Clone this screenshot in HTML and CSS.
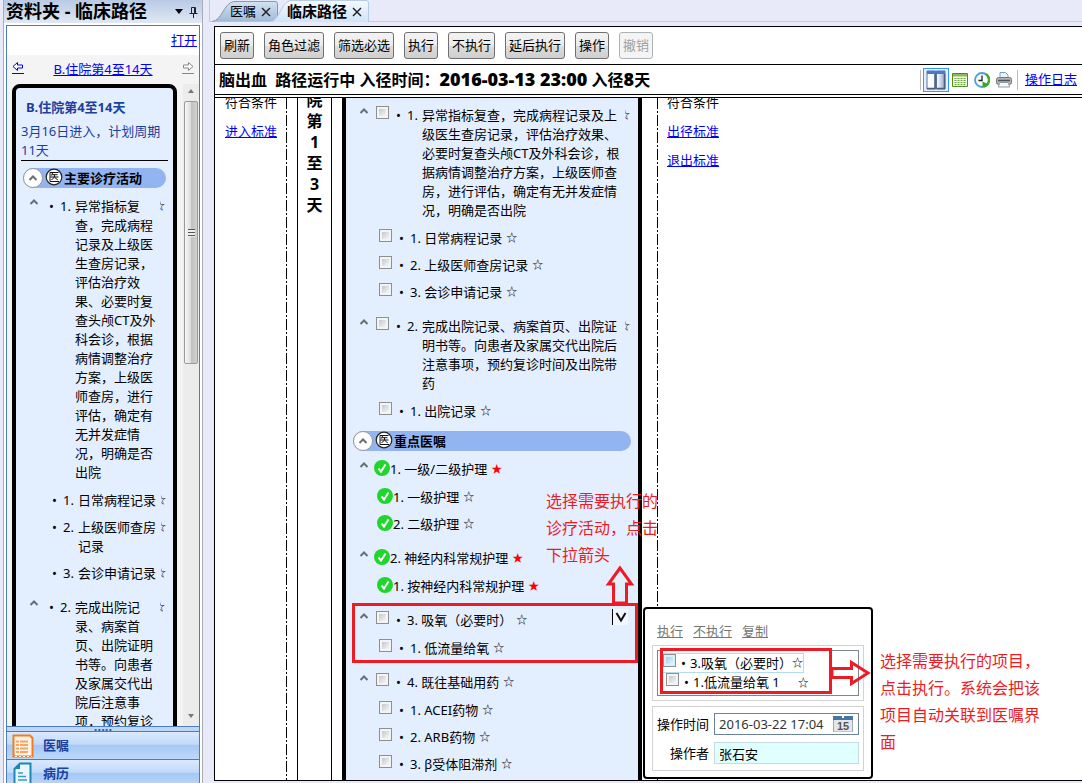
FILE: index.html
```html
<!DOCTYPE html>
<html lang="zh-CN">
<head>
<meta charset="utf-8">
<title>临床路径</title>
<link rel="stylesheet" href="styles.css">
</head>
<body>
<svg class="defs" aria-hidden="true">
  <symbol id="chev" viewBox="0 0 10 6"><path d="M1.5 5L5 1.5L8.5 5" fill="none" stroke="#6b6f75" stroke-width="2"/></symbol>
  <symbol id="med" viewBox="0 0 18 18"><circle cx="9" cy="9" r="7.8" fill="#fff" stroke="#222" stroke-width="1.2"/><path d="M13.5 4.500H5v9h9M7.500 5L6.500 7.500M7 6.700h5.500M5.500 9h8M9.500 6.700V9L6.500 12M9.800 9.500l3 2.500" fill="none" stroke="#111" stroke-width="1"/></symbol>
  <symbol id="ok" viewBox="0 0 16 16"><circle cx="8" cy="8" r="8" fill="#1fd62b"/><path d="M4.500 8.500L7 11.500L11.500 4.500" fill="none" stroke="#fff" stroke-width="2"/></symbol>
  <symbol id="x" viewBox="0 0 10 10"><path d="M1 1L9 9M9 1L1 9" stroke="#222" stroke-width="1.500"/></symbol>
</svg>
<div class="app">
  <aside class="side">
    <header class="side-head">
      <h1>资料夹 - 临床路径</h1>
      <svg class="side-tools" viewBox="0 0 24 12"><path d="M0 3h8L4 8z" fill="#000"/><path d="M16.500 7V1.500h4V7M14.500 7.500h8M18.500 7.500v4.500M19.500 1.500V7" fill="none" stroke="#222"/></svg>
    </header>
    <div class="side-panel">
      <div class="open-row"><a href="#">打开</a></div>
      <nav class="stage-nav">
        <a href="#" aria-label="上一阶段"><svg viewBox="0 0 12 14"><path d="M1 5.500L5.500 1.500V4H10.500V7H5.500V9.500Z" fill="#fff" stroke="#00f"/><path d="M0 12.500h12" stroke="#00f"/></svg></a>
        <a href="#">B.住院第4至14天</a>
        <a href="#" aria-label="下一阶段"><svg viewBox="0 0 12 14"><path d="M11 5.500L6.500 1.500V4H1.500V7H6.500V9.500Z" fill="#fff" stroke="#888"/><path d="M0 12.500h12" stroke="#888"/></svg></a>
      </nav>
      <div class="side-body">
        <section class="card">
          <h2>B.住院第4至14天</h2>
          <p class="period">3月16日进入，计划周期11天</p>
          <div class="group-head"><span class="toggle"><svg><use href="#chev"/></svg></span><svg class="med"><use href="#med"/></svg>主要诊疗活动</div>
          <div class="item"><svg class="chev"><use href="#chev"/></svg><span class="dot">•</span><span class="num">1.</span><span class="txt">异常指标复查，完成病程记录及上级医生查房记录，评估治疗效果、必要时复查头颅CT及外科会诊，根据病情调整治疗方案，上级医师查房，进行评估，确定有无并发症情况，明确是否出院</span><span class="star">☆</span></div>
          <div class="item sub first"><span class="dot">•</span><span class="num">1.</span><span class="txt">日常病程记录</span><span class="star">☆</span></div>
          <div class="item sub"><span class="dot">•</span><span class="num">2.</span><span class="txt">上级医师查房记录</span><span class="star">☆</span></div>
          <div class="item sub"><span class="dot">•</span><span class="num">3.</span><span class="txt">会诊申请记录</span><span class="star">☆</span></div>
          <div class="item later"><svg class="chev"><use href="#chev"/></svg><span class="dot">•</span><span class="num">2.</span><span class="txt">完成出院记录、病案首页、出院证明书等。向患者及家属交代出院后注意事项，预约复诊时间及出院带药</span><span class="star">☆</span></div>
        </section>
        <div class="scroll"><span class="up"></span><div class="thumb"><i></i></div><span class="down"></span></div>
      </div>
      <div class="grip">·····</div>
      <button class="nav-btn" type="button"><svg viewBox="0 0 22 24"><path d="M1.500 1.500H18L20.500 4V22.500H1.500Z" fill="#fff2e6" stroke="#f47b20" stroke-width="2"/><path d="M4 7.500h12M4 11h12M4 14.500h12M4 18h12" stroke="#f6a564" stroke-width="2"/><path d="M7.500 6v14" stroke="#fff2e6"/><path d="M3 22.500h17" stroke="#fff" stroke-dasharray="2 2"/></svg>医嘱</button>
      <button class="nav-btn" type="button"><svg viewBox="0 0 22 24"><path d="M8 1.500H18.500V22.500H2.500V7Z" fill="#e9f6fc" stroke="#1b87b8" stroke-width="2"/><path d="M8 1.500V7H2.500Z" fill="#1b87b8"/><path d="M6 11h5M6 14.500h8M6 18h9" stroke="#3d9cc6" stroke-width="1.500"/></svg>病历</button>
    </div>
  </aside>

  <main class="main">
    <div class="tabs">
      <button class="tab" type="button"><svg class="shape" viewBox="0 0 68 22" preserveAspectRatio="none"><defs><linearGradient id="g1" x2="0" y2="1"><stop offset="0" stop-color="#d3e2f2"/><stop offset="1" stop-color="#9fbad8"/></linearGradient></defs><path d="M0 21.500C10 21 12 3 22 1.500H64Q66.500 1.500 66.500 4V21.500" fill="url(#g1)" stroke="#8a97a8"/></svg><span>医嘱</span><svg class="x"><use href="#x"/></svg></button>
      <button class="tab active" type="button"><svg class="shape" viewBox="0 0 100 22" preserveAspectRatio="none"><defs><linearGradient id="g2" x2="0" y2="1"><stop offset="0" stop-color="#f4f9ff"/><stop offset="1" stop-color="#cfe4f9"/></linearGradient></defs><path d="M0 22C9 21 11 3 20 .5H96Q98.500 .5 98.500 3V22" fill="url(#g2)" stroke="#b6cbe4"/></svg><span>临床路径</span><svg class="x"><use href="#x"/></svg></button>
    </div>
    <div class="page">
      <div class="toolbar">
        <button type="button">刷新</button><button type="button">角色过滤</button><button type="button">筛选必选</button><button type="button">执行</button><button type="button">不执行</button><button type="button">延后执行</button><button type="button">操作</button><button type="button" disabled>撤销</button>
      </div>
      <div class="status">
        <h2>脑出血&nbsp; 路径运行中 入径时间：<b>2016-03-13 23:00</b> 入径<b>8</b>天</h2>
        <div class="views">
          <i class="sep"></i>
          <button class="view on" type="button" aria-label="双栏"><svg viewBox="0 0 20 20"><defs><linearGradient id="g3" x2="1"><stop offset="0" stop-color="#fff"/><stop offset=".6" stop-color="#f2f6fb"/><stop offset="1" stop-color="#8fa6c6"/></linearGradient></defs><path d="M1 1h8.500v18H1zM10.500 1H19v18h-8.500z" fill="url(#g3)" stroke="#56709a"/><path d="M1 1h8.500v3H1zM10.500 1H19v3h-8.500z" fill="#4a78d4"/><path d="M1 18.500h8.500M10.500 18.500H19M9 4v15M18.500 4v15" stroke="#4d5f7c" stroke-width="1.500"/></svg></button>
          <button class="view" type="button" aria-label="表格"><svg viewBox="0 0 16 16"><path d="M.500 1.500h15v13H.500z" fill="#f1f8e8" stroke="#4c8a22"/><path d="M1 2h14v2.500H1z" fill="#8cbb5f"/><path d="M2.500 6.500h11M2.500 8.500h11M2.500 10.500h11M2.500 12.500h11" stroke="#6ba53d" stroke-dasharray="2 1"/></svg></button>
          <button class="view" type="button" aria-label="历史"><svg viewBox="0 0 16 16"><circle cx="8" cy="8" r="7" fill="#f5fbff" stroke="#4aa3dc" stroke-width="1.800"/><path d="M12 2A7 7 0 0 1 10 14.500" fill="none" stroke="#46ad2f" stroke-width="2.500"/><path d="M8 3.500V8.500H4.500" fill="none" stroke="#222" stroke-width="1.300"/><path d="M8.500 15.500V9.500l6.500 3z" fill="#3da52b"/></svg></button>
          <button class="view" type="button" aria-label="打印"><svg viewBox="0 0 16 16"><path d="M4 .500h5.500L12 3v4H4z" fill="#eaf4fe" stroke="#6fa1d4"/><rect x=".500" y="5.500" width="15" height="7" rx="2" fill="#b4b4b4" stroke="#777"/><path d="M2 8.500h12" stroke="#555" stroke-width="1.500"/><path d="M3.500 10.500h9l1 4.500h-11z" fill="#f5f9fe" stroke="#8d9db0"/></svg></button>
          <i class="sep"></i>
          <a href="#">操作日志</a>
        </div>
      </div>
      <div class="board">
        <div class="col in"><span>符合条件</span><a href="#">进入标准</a></div>
        <i class="dash"></i>
        <div class="col stage"><span>院</span><span>第</span><span>1</span><span>至</span><span>3</span><span>天</span></div>
        <div class="col plan">
          <div class="item"><svg class="chev"><use href="#chev"/></svg><input type="checkbox" aria-label="异常指标复查"><span class="dot">•</span><span class="num">1.</span><span class="txt">异常指标复查，完成病程记录及上级医生查房记录，评估治疗效果、必要时复查头颅CT及外科会诊，根据病情调整治疗方案，上级医师查房，进行评估，确定有无并发症情况，明确是否出院</span><span class="star cut">☆</span></div>
          <div class="item sub first"><input type="checkbox" id="c1"><span class="dot">•</span><label for="c1">1. 日常病程记录</label><span class="star">☆</span></div>
          <div class="item sub"><input type="checkbox" id="c2"><span class="dot">•</span><label for="c2">2. 上级医师查房记录</label><span class="star">☆</span></div>
          <div class="item sub"><input type="checkbox" id="c3"><span class="dot">•</span><label for="c3">3. 会诊申请记录</label><span class="star">☆</span></div>
          <div class="item later"><svg class="chev"><use href="#chev"/></svg><input type="checkbox" aria-label="完成出院记录"><span class="dot">•</span><span class="num">2.</span><span class="txt">完成出院记录、病案首页、出院证明书等。向患者及家属交代出院后注意事项，预约复诊时间及出院带药</span><span class="star cut">☆</span></div>
          <div class="item sub first"><input type="checkbox" id="c4"><span class="dot">•</span><label for="c4">1. 出院记录</label><span class="star">☆</span></div>
          <div class="group-head"><span class="toggle"><svg><use href="#chev"/></svg></span><svg class="med"><use href="#med"/></svg>重点医嘱</div>
          <div class="item"><svg class="chev"><use href="#chev"/></svg><svg class="ok"><use href="#ok"/></svg><span>1. 一级/二级护理</span><span class="star red">★</span></div>
          <div class="item sub first"><svg class="ok"><use href="#ok"/></svg><span>1. 一级护理</span><span class="star">☆</span></div>
          <div class="item sub"><svg class="ok"><use href="#ok"/></svg><span>2. 二级护理</span><span class="star">☆</span></div>
          <div class="item later"><svg class="chev"><use href="#chev"/></svg><svg class="ok"><use href="#ok"/></svg><span>2. 神经内科常规护理</span><span class="star red">★</span></div>
          <div class="item sub first"><svg class="ok"><use href="#ok"/></svg><span>1. 按神经内科常规护理</span><span class="star red">★</span></div>
          <div class="marked">
            <div class="item"><svg class="chev"><use href="#chev"/></svg><input type="checkbox" id="c5"><span class="dot">•</span><label for="c5">3. 吸氧（必要时）</label><span class="star">☆</span><button class="drop" type="button" aria-label="展开"><svg viewBox="0 0 12 12"><path d="M1.500 2L6 9.500L10.500 2" fill="none" stroke="#111" stroke-width="2"/></svg></button></div>
            <div class="item sub first"><input type="checkbox" id="c6"><span class="dot">•</span><label for="c6">1. 低流量给氧</label><span class="star">☆</span></div>
            <div class="note note-left">选择需要执行的诊疗活动，点击下拉箭头</div>
            <svg class="arrow-up" viewBox="0 0 30 40"><path d="M15 3L3.500 19H8.500V38H21.500V19H26.500Z" fill="none" stroke="#ed1c24" stroke-width="3"/></svg>
            <div class="popup">
              <div class="pop-links"><a href="#">执行</a><a href="#">不执行</a><a href="#">复制</a></div>
              <div class="frame">
                <div class="pick">
                  <div class="pick-row hot"><input type="checkbox" id="p1"><span class="dot">•</span><label for="p1">3.吸氧（必要时）</label><span class="mini">☆</span></div>
                  <div class="pick-row under"><input type="checkbox" id="p2"><span class="dot">•</span><label for="p2">1.低流量给氧 1</label><span class="mini far">☆</span></div>
                </div>
                <svg class="arrow-right" viewBox="0 0 40 28"><path d="M1 9.500H20.500V3.500L37 14L20.500 24.500V18.500H1Z" fill="none" stroke="#ed1c24" stroke-width="3"/></svg>
              </div>
              <div class="frame form">
                <label for="when">操作时间</label>
                <div class="date"><input id="when" type="text" value="2016-03-22 17:04"><svg viewBox="0 0 20 16"><path d="M.500 0h19v16H.500z" fill="#e4e6ea" stroke="#a4a8ae"/><path d="M0 0h20v4H0z" fill="#4577a6"/><path d="M9 0h2v2H9z" fill="#fff"/><text x="4" y="14">15</text></svg></div>
                <label for="who" class="who">操作者</label>
                <input id="who" class="name" type="text" value="张石安">
              </div>
              <div class="note note-right">选择需要执行的项目，点击执行。系统会把该项目自动关联到医嘱界面</div>
            </div>
          </div>
          <div class="item later"><svg class="chev"><use href="#chev"/></svg><input type="checkbox" id="c7"><span class="dot">•</span><label for="c7">4. 既往基础用药</label><span class="star">☆</span></div>
          <div class="item sub first"><input type="checkbox" id="c8"><span class="dot">•</span><label for="c8">1. ACEI药物</label><span class="star">☆</span></div>
          <div class="item sub"><input type="checkbox" id="c9"><span class="dot">•</span><label for="c9">2. ARB药物</label><span class="star">☆</span></div>
          <div class="item sub"><input type="checkbox" id="c10"><span class="dot">•</span><label for="c10">3. β受体阻滞剂</label><span class="star">☆</span></div>
        </div>
        <i class="dash"></i>
        <div class="col out"><span>符合条件</span><a href="#">出径标准</a><a href="#">退出标准</a></div>
      </div>
    </div>
  </main>
</div>
</body>
</html>
```

FILE: styles.css
```css
*, *::before, *::after { box-sizing: border-box; }
body {
  margin: 0;
  font: 13px/19px "Noto Sans", "Noto Sans CJK SC", sans-serif;
  color: #000;
  background: #e8eaf9;
}
button, input { font: inherit; color: inherit; }
a { color: #00f; }
h1, h2, p { margin: 0; }
.defs { position: absolute; width: 0; height: 0; }
.app { display: flex; height: 100vh; overflow: hidden; }

/* sidebar */
.side {
  flex: 0 0 200px;
  margin-left: 3px;
  display: flex;
  flex-direction: column;
  border: solid #a9adb5;
  border-width: 0 1px;
  background: #fff;
}
.side-head {
  display: flex;
  align-items: center;
  justify-content: space-between;
  flex: 0 0 23px;
  padding: 0 3px 0 2px;
  background: linear-gradient(#b9cae4, #dfe8f5);
}
.side-head h1 { font-size: 18px; line-height: 23px; white-space: nowrap; }
.side-tools { width: 24px; height: 12px; }
.side-panel {
  flex: 1;
  min-height: 0;
  display: flex;
  flex-direction: column;
  margin: 2px 2px 0;
  border: solid #4a7ebb;
  border-width: 1px 1px 0;
}
.open-row { flex: 0 0 29px; padding: 5px 2px; text-align: right; }
.stage-nav {
  flex: 0 0 29px;
  display: flex;
  justify-content: space-between;
  padding: 5px 5px 0;
  background: #f4f4f4;
}
.stage-nav svg { display: block; width: 12px; height: 14px; margin-top: 1px; }
.side-body { flex: 1; min-height: 0; display: flex; overflow: hidden; background: #f4f4f4; }
.card {
  flex: 1;
  min-width: 0;
  height: 800px;
  margin: 0 6px 0 5px;
  padding: 10px 5px 0;
  border: 4px solid #000;
  border-radius: 8px 8px 0 0;
  background: #e3eeff;
}
.card h2 { padding-left: 5px; font-size: 13px; line-height: 19px; color: #1a3f9f; }
.period { margin-top: 5px; color: #1a3f9f; border-bottom: 1px solid #000; }
.scroll {
  flex: 0 0 16px;
  display: flex;
  flex-direction: column;
  align-items: center;
  background: #ececec;
}
.up, .down { border: 3px solid transparent; }
.up { margin: 2px 0 8px; border-bottom: 4px solid #777; }
.down { margin: auto 0 5px; border-top: 4px solid #777; }
.thumb {
  width: 14px;
  flex: 0 1 263px;
  display: grid;
  place-items: center;
  border: 1px solid #999;
  border-radius: 2px;
  background: linear-gradient(90deg, #f6f6f6, #dcdcdc 50%, #bdbfc2 51%, #d2d2d2);
}
.thumb i { width: 7px; height: 8px; background: repeating-linear-gradient(#555 0 1px, #eee 1px 3px); }
.grip {
  flex: 0 0 5px;
  border-top: 1px solid #4a7ebb;
  background: #bdd6f7;
  color: #2b5fa8;
  font-weight: bold;
  line-height: 4px;
  text-align: center;
  overflow: hidden;
}
.nav-btn {
  flex: 0 0 28px;
  display: flex;
  align-items: center;
  gap: 9px;
  padding: 0 5px;
  border: 0;
  border-top: 1px solid #4a7ebb;
  background: linear-gradient(#dbe9fd, #c2daf9 45%, #a6c8f5 50%, #bdd9fb);
  color: #1a3f9f;
  font-weight: bold;
}
.nav-btn svg { width: 22px; height: 24px; }
.nav-btn:last-child { margin-bottom: -4px; }

/* list rows shared by the sidebar and the board */
.item { position: relative; display: flex; margin-top: 9px; padding-left: 30px; }
.item.sub { margin-top: 8px; padding-left: 33px; }
.item.first { margin-top: 9px; }
.item.later { margin-top: 15px; }
.chev { position: absolute; left: 13px; top: 2px; width: 10px; height: 6px; }
.dot { flex: 0 0 9px; }
.num { flex: 0 0 15px; }
.ok { width: 16px; height: 16px; margin-left: -2px; }
.star { flex: none; margin-left: 4px; font-size: 11px; line-height: 18px; }
.star.red { color: #f00; }
.star.cut { width: 5px; margin-left: 3px; overflow: hidden; direction: rtl; }
.item label, .item > span { white-space: nowrap; }
.item .txt { white-space: normal; }
.group-head {
  display: flex;
  align-items: center;
  height: 20px;
  border-radius: 10px;
  background: #92b4f0;
  font-weight: bold;
}
.toggle {
  display: grid;
  place-items: center;
  width: 20px;
  height: 20px;
  border: 1px solid #999;
  border-radius: 50%;
  background: #fff;
}
.toggle svg { width: 10px; height: 6px; }
.med { width: 18px; height: 18px; margin: 0 1px 3px 2px; }
input[type="checkbox"] {
  appearance: none;
  flex: none;
  width: 13px;
  height: 13px;
  margin: 0;
  border: 1px solid #8e8f8f;
  background: linear-gradient(135deg, #c4c9cf, #f6f6f6) content-box, #f4f4f4;
  padding: 2px;
}

.card .group-head { margin: 7px 2px 9px; }
.card .item { margin-right: -1px; overflow: hidden; padding-left: 28px; }
.card .item .chev { left: 8px; }
.card .item.sub { padding-left: 31px; }
.card .dot { flex-basis: 11px; }
.card .txt { flex: 0 0 83px; }
.card .star { width: 5px; margin-left: 2px; overflow: hidden; direction: rtl; }
.card .sub .star { margin-left: 0; }

/* main */
.main { flex: 1; min-width: 0; display: flex; flex-direction: column; padding-left: 6px; }
.tabs { flex: 0 0 22px; display: flex; padding-left: 2px; border-bottom: 1px solid #c9cbd4; border-left: 1px solid #c9cbd4; }
.tab {
  position: relative;
  display: flex;
  align-items: center;
  gap: 5px;
  width: 67px;
  padding: 2px 0 0 18px;
  border: 0;
  background: none;
}
.tab span, .tab .x { position: relative; white-space: nowrap; }
.shape { position: absolute; left: 0; top: 0; width: 100%; height: 22px; }
.x { width: 10px; height: 10px; }
.tab.active { width: 100px; margin-left: -9px; padding-left: 17px; font-size: 15px; font-weight: bold; }
.page {
  flex: 1;
  min-height: 0;
  display: flex;
  flex-direction: column;
  margin: 4px 0 2px 5px;
  border: solid #000;
  border-width: 1px 0 1px 1px;
  background: #fff;
}
.toolbar { display: flex; gap: 10px; padding: 5px; border-bottom: 1px solid #000; }
.toolbar button {
  height: 27px;
  padding: 0 3px;
  border: 1px solid #707070;
  border-radius: 3px;
  background: linear-gradient(#f3f3f3, #ebebeb 50%, #dddddd 51%, #cfcfcf);
  white-space: nowrap;
}
.toolbar button:disabled { border-color: #adb2b5; background: #f4f4f4; color: #a0a0a0; }
.status {
  flex: 0 0 30px;
  display: flex;
  align-items: center;
  justify-content: space-between;
  padding: 0 5px 0 4px;
  border-bottom: 1px solid #000;
}
.status h2 { font-size: 16px; line-height: 24px; white-space: nowrap; }
.status b { font-size: 18px; }
.views { display: flex; align-items: center; }
.sep { width: 1px; height: 20px; background: #bbb; }
.view { display: block; height: 16px; margin-left: 6px; padding: 0; border: 0; background: none; }
.view svg { display: block; width: 16px; height: 16px; }
.view.on { height: 24px; margin: 0 -3px 0 2px; padding: 1px 2px; border: 1px solid #3399ff; background: #e3effd; }
.view.on svg { width: 20px; height: 20px; }
.views .sep:nth-of-type(2) { margin: 0 7px 0 5px; }
.board { flex: 1; min-height: 0; display: flex; margin-top: 2px; border-top: 1px solid #000; overflow: hidden; }
.dash { flex: 0 0 1px; background: repeating-linear-gradient(#000 0 11px, #fff 11px 13px, #000 13px 15px, #fff 15px 17px); }
.in, .out { display: flex; flex-direction: column; gap: 10px; padding: 0 9px; }
.in { flex: 0 0 71px; padding-left: 10px; }
.in > :first-child, .out > :first-child { margin-top: -5px; }
.in *, .out * { white-space: nowrap; }
.out { flex: 1; }
.stage {
  flex: 0 0 35px;
  display: flex;
  flex-direction: column;
  align-items: center;
  margin: 0 10px;
  border: solid #000;
  border-width: 0 1px;
  font-size: 16px;
  font-weight: bold;
  line-height: 21px;
}
.stage :first-child { margin-top: -8px; }
.plan { flex: 0 0 300px; margin-right: 15px; border: solid #000; border-width: 0 4px; background: #e3eeff; }
.plan > .item:first-child { margin-top: 8px; }
.plan .dot { flex-basis: 11px; margin-left: 7px; }
.plan .txt { flex: 0 0 200px; }
.plan .group-head { margin: 10px 7px 0; }

/* marked rows with callouts */
.marked { position: relative; margin: 7px 0 0; padding: 8px 0 5px; }
.marked::before { content: ""; position: absolute; left: 6px; right: 0; top: 0; bottom: 0; border: 3px solid #ed1c24; pointer-events: none; }
.marked > .item:first-child { margin-top: 0; }
.marked + .later { margin-top: 10px; }
.drop {
  display: grid;
  place-items: center;
  width: 16px;
  height: 16px;
  margin: -2px 10px 0 auto;
  padding: 0;
  border: 0;
  border-left: 1px solid #000;
  background: #f2f7ff;
}
.drop svg { width: 12px; height: 12px; }
.note { position: absolute; font-size: 16px; line-height: 27px; color: #ed1c24; }
.note-left { left: 200px; top: -115px; width: 114px; }
.arrow-up { position: absolute; left: 259px; top: -38px; width: 30px; height: 40px; }
.popup {
  position: absolute;
  left: 297px;
  top: 4px;
  width: 230px;
  padding: 13px 7px 6px;
  border: 2px solid #000;
  border-radius: 4px;
  background: #fff;
}
.pop-links { display: flex; gap: 10px; padding: 0 5px; margin-bottom: 4px; }
.pop-links a { color: #777; }
.frame { position: relative; padding: 4px; border: 1px solid #d3d3d3; }
.frame + .frame { margin-top: 5px; }
.pick { position: relative; height: 46px; padding: 2px; border: 1px solid #7b8794; }
.pick::after { content: ""; position: absolute; left: 2px; top: -3px; width: 172px; height: 46px; border: 3px solid #ed1c24; pointer-events: none; }
.pick-row { display: flex; padding-left: 2px; white-space: nowrap; }
.pick-row .dot { flex-basis: 9px; margin-left: 5px; }
.mini { font-size: 11px; }
.hot { width: 144px; border: 1px solid #b3dcee; line-height: 18px; }
.hot input[type="checkbox"] { background: linear-gradient(135deg, #9fd3ee, #e4f5fd) content-box, #d9effa; }
.pick .under { padding-left: 6px; }
.far { margin-left: 18px; }
.arrow-right { position: absolute; left: 178px; top: 13px; width: 40px; height: 28px; z-index: 1; }
.form { display: grid; grid-template-columns: auto 1fr; gap: 7px 5px; padding: 6px 4px; align-items: center; }
.date { display: flex; align-items: center; height: 22px; padding: 0 5px 0 4px; border: 1px solid #6b8297; }
.date input { flex: 1; width: 0; min-width: 0; padding: 0; border: 0; outline: 0; color: #333; }
.date svg { width: 20px; height: 16px; }
.date text { font: bold 11px "Liberation Sans", sans-serif; fill: #555; }
.who { text-align: right; }
.name { width: 100%; min-width: 0; height: 22px; padding: 0 4px; border: 1px solid #c6dbe0; background: #e0ffff; }
.note-right { left: 235px; top: 39px; width: 163px; }
```
